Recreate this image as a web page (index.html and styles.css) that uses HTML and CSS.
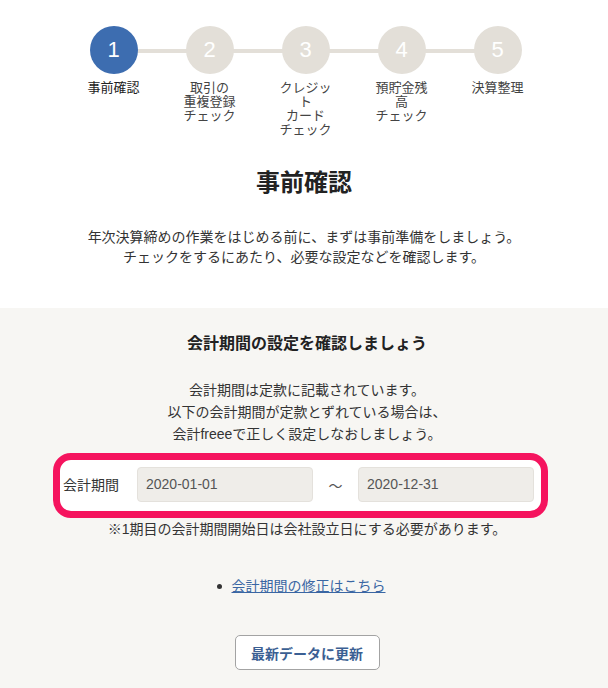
FILE: index.html
```html
<!DOCTYPE html>
<html lang="ja">
<head>
<meta charset="utf-8">
<title>事前確認</title>
<link rel="stylesheet" href="styles.css">
</head>
<body>
<div class="top">
  <ol class="steps">
    <li class="step active"><span class="circle">1</span><span class="label">事前確認</span></li>
    <li class="step"><span class="circle">2</span><span class="label">取引の<br>重複登録<br>チェック</span></li>
    <li class="step"><span class="circle">3</span><span class="label">クレジット<br>カード<br>チェック</span></li>
    <li class="step"><span class="circle">4</span><span class="label">預貯金残高<br>チェック</span></li>
    <li class="step"><span class="circle">5</span><span class="label">決算整理</span></li>
  </ol>
  <h1 class="title">事前確認</h1>
  <p class="lead">年次決算締めの作業をはじめる前に、まずは事前準備をしましょう。<br>チェックをするにあたり、必要な設定などを確認します。</p>
</div>
<div class="panel">
  <h2 class="panel-title">会計期間の設定を確認しましょう</h2>
  <p class="desc">会計期間は定款に記載されています。<br>以下の会計期間が定款とずれている場合は、<br>会計freeeで正しく設定しなおしましょう。</p>
  <div class="period-box">
    <span class="period-label">会計期間</span>
    <span class="field">2020-01-01</span>
    <span class="tilde">～</span>
    <span class="field">2020-12-31</span>
  </div>
  <p class="note">※1期目の会計期間開始日は会社設立日にする必要があります。</p>
  <ul class="links">
    <li class="link-item"><span class="bullet"></span><a href="#">会計期間の修正はこちら</a></li>
  </ul>
  <div class="actions">
    <button class="btn" type="button">最新データに更新</button>
  </div>
</div>
</body>
</html>
```
FILE: styles.css
```css
html, body {
  margin: 0;
  padding: 0;
}
body {
  width: 608px;
  height: 688px;
  overflow: hidden;
  background: #f7f6f3;
  color: #333;
  font-family: "Liberation Sans", "Noto Sans CJK JP", sans-serif;
  font-size: 14px;
}
.top {
  background: #fff;
  padding: 26px 0 41px;
}
.steps {
  list-style: none;
  margin: 0 auto;
  padding: 0 0 0 3px;
  display: flex;
  justify-content: center;
}
.step {
  width: 96px;
  display: flex;
  flex-direction: column;
  align-items: center;
  position: relative;
}
.step + .step::before {
  content: "";
  position: absolute;
  top: 23px;
  left: -48px;
  width: 96px;
  height: 4px;
  background: #e3dfd8;
  z-index: 0;
}
.circle {
  width: 48px;
  height: 48px;
  border-radius: 50%;
  background: #e3dfd8;
  color: #fff;
  font-size: 22px;
  line-height: 48px;
  text-align: center;
  position: relative;
  z-index: 1;
}
.step.active .circle {
  background: #3d6db0;
}
.label {
  margin-top: 7px;
  width: 60px;
  font-size: 13px;
  line-height: 14px;
  text-align: center;
  color: #444;
}
.step.active .label {
  color: #222;
}
.title {
  margin: 30px 0 0;
  font-size: 24px;
  line-height: 32px;
  font-weight: bold;
  text-align: center;
  color: #222;
}
.lead {
  margin: 28px 0 0;
  font-size: 14px;
  line-height: 20px;
  text-align: center;
}
.panel {
  padding: 24px 0 0 0;
  display: flex;
  flex-direction: column;
  align-items: center;
}
.panel-title {
  margin: 0 0 0 6px;
  font-size: 16px;
  line-height: 24px;
  font-weight: bold;
  color: #222;
}
.desc {
  margin: 23px 0 0 6px;
  line-height: 22px;
  text-align: center;
}
.period-box {
  margin: 8px 0 0 -7px;
  width: 471px;
  border: 7px solid #f5145e;
  border-radius: 18px;
  background: #fff;
  padding: 7px 7px 9px 3px;
  display: flex;
  align-items: center;
  box-sizing: content-box;
}
.period-label {
  width: 56px;
  margin-right: 18px;
  line-height: 20px;
}
.field {
  width: 176px;
  height: 35px;
  box-sizing: border-box;
  background: #efede9;
  border: 1px solid #e4e1dc;
  border-radius: 4px;
  padding: 0 8px;
  color: #555;
  line-height: 33px;
}
.tilde {
  width: 45px;
  text-align: center;
  color: #555;
}
.note {
  margin: 0 0 0 6px;
  line-height: 22px;
}
.links {
  margin: 35px 0 0 -6px;
  padding: 0;
  list-style: none;
  line-height: 22px;
}
.link-item {
  display: flex;
  align-items: center;
  gap: 10px;
}
.bullet {
  width: 5px;
  height: 5px;
  border-radius: 50%;
  background: #333;
}
.links a {
  color: #3a66a3;
  text-decoration: underline;
}
.actions {
  margin-top: 38px;
  padding-left: 6px;
}
.btn {
  width: 145px;
  height: 35px;
  background: #fff;
  border: 1px solid #a3a3a3;
  border-radius: 5px;
  color: #3b5f93;
  font-family: "Liberation Sans", "Noto Sans CJK JP", sans-serif;
  font-size: 14px;
  font-weight: bold;
  padding: 0;
}
```
